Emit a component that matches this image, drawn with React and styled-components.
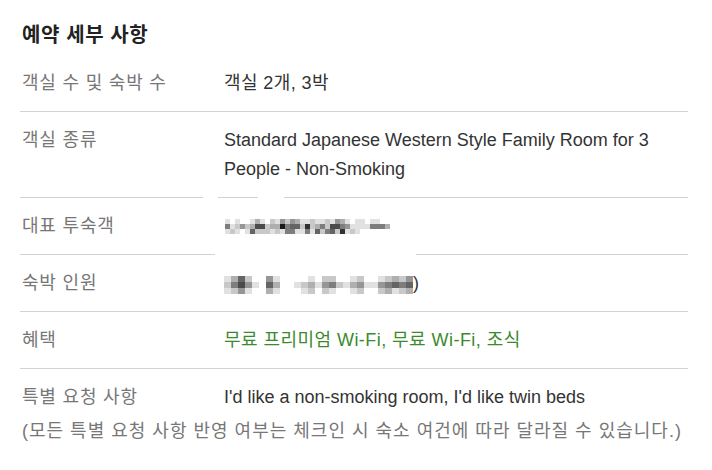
import React from "react";
import styled, { createGlobalStyle } from "styled-components";

const GlobalStyle = createGlobalStyle`
  html, body { margin: 0; padding: 0; background: #ffffff; }
  body {
    font-family: "Liberation Sans", "Noto Sans CJK KR", Arial, sans-serif;
    -webkit-font-smoothing: antialiased;
  }
`;

const Page = styled.section`
  width: 668px;
  padding: 21px 24px 20px 20px;
`;

const Title = styled.h2`
  margin: 0 0 6px 2px;
  font-size: 20px;
  line-height: 28px;
  font-weight: 700;
  letter-spacing: 0.6px;
  color: #222222;
`;

const Row = styled.div`
  position: relative;
  display: grid;
  grid-template-columns: 202px 1fr;
  padding: 14px 0 ${(p) => (p.$last ? "5px" : "13.3px")} 2px;
  border-bottom: ${(p) => (p.$last ? "none" : "1px solid #d2d2d2")};
  font-size: 18px;
  line-height: 28.8px;
`;

const Label = styled.div`
  color: #777777;
  letter-spacing: 0.8px;
`;

const Value = styled.div`
  color: ${(p) => (p.$tone === "green" ? "#3b8a2d" : "#333333")};
  letter-spacing: ${(p) => p.$ls || "0"};
  display: flex;
  align-items: center;
  flex-wrap: wrap;
`;

const Note = styled.p`
  margin: 0 0 0 2px;
  font-size: 18px;
  line-height: 28.8px;
  letter-spacing: 1px;
  color: #777777;
`;

const Patch = styled.span`
  position: absolute;
  background: #ffffff;
  height: 3px;
`;

const MosaicSvg = styled.svg`
  display: block;
  shape-rendering: crispEdges;
`;

function Mosaic({ rows, cw, ch }) {
  const cols = rows[0].length;
  return (
    <MosaicSvg width={cols * cw} height={rows.length * ch} viewBox={`0 0 ${cols * cw} ${rows.length * ch}`}>
      {rows.map((r, y) =>
        r.split("").map((v, x) => {
          const n = parseInt(v, 10);
          if (!n) return null;
          const g = Math.round(250 - n * 25);
          return (
            <rect key={`${x}-${y}`} x={x * cw} y={y * ch} width={cw} height={ch} fill={`rgb(${g},${g},${g})`} />
          );
        })
      )}
    </MosaicSvg>
  );
}

const guestRows = [
  "101001310214243112112143101101100",
  "512423772339566282352775411115553",
  "121016222121551151625628121000000",
];

const occRows = [
  "136200410000102200120012324",
  "257410630012314521341145656",
  "124100310001202100120023123",
];

const MosaicBox = styled.div`
  padding: ${(p) => p.$pad};
`;

export default function App() {
  return (
    <>
      <GlobalStyle />
      <Page>
        <Title>예약 세부 사항</Title>
        <Row>
          <Label>객실 수 및 숙박 수</Label>
          <Value $ls="0.4px">객실 2개, 3박</Value>
        </Row>
        <Row>
          <Label>객실 종류</Label>
          <Value>Standard Japanese Western Style Family Room for 3 People - Non-Smoking</Value>
        </Row>
        <Row>
          <Patch style={{ left: 183, width: 15, top: -2 }} />
          <Patch style={{ left: 238, width: 26, top: -2 }} />
          <Label>대표 투숙객</Label>
          <Value>
            <MosaicBox $pad="0 0 0 1px">
              <Mosaic rows={guestRows} cw={5} ch={5} />
            </MosaicBox>
          </Value>
          <Patch style={{ left: 195, width: 201, bottom: -2 }} />
        </Row>
        <Row>
          <Label>숙박 인원</Label>
          <Value>
            <MosaicBox $pad="4px 0 0 0">
              <Mosaic rows={occRows} cw={7} ch={6} />
            </MosaicBox>
            <span>)</span>
          </Value>
        </Row>
        <Row>
          <Label>혜택</Label>
          <Value $tone="green" $ls="0.45px">무료 프리미엄 Wi-Fi, 무료 Wi-Fi, 조식</Value>
        </Row>
        <Row $last>
          <Label>특별 요청 사항</Label>
          <Value>I'd like a non-smoking room, I'd like twin beds</Value>
        </Row>
        <Note>(모든 특별 요청 사항 반영 여부는 체크인 시 숙소 여건에 따라 달라질 수 있습니다.)</Note>
      </Page>
    </>
  );
}
